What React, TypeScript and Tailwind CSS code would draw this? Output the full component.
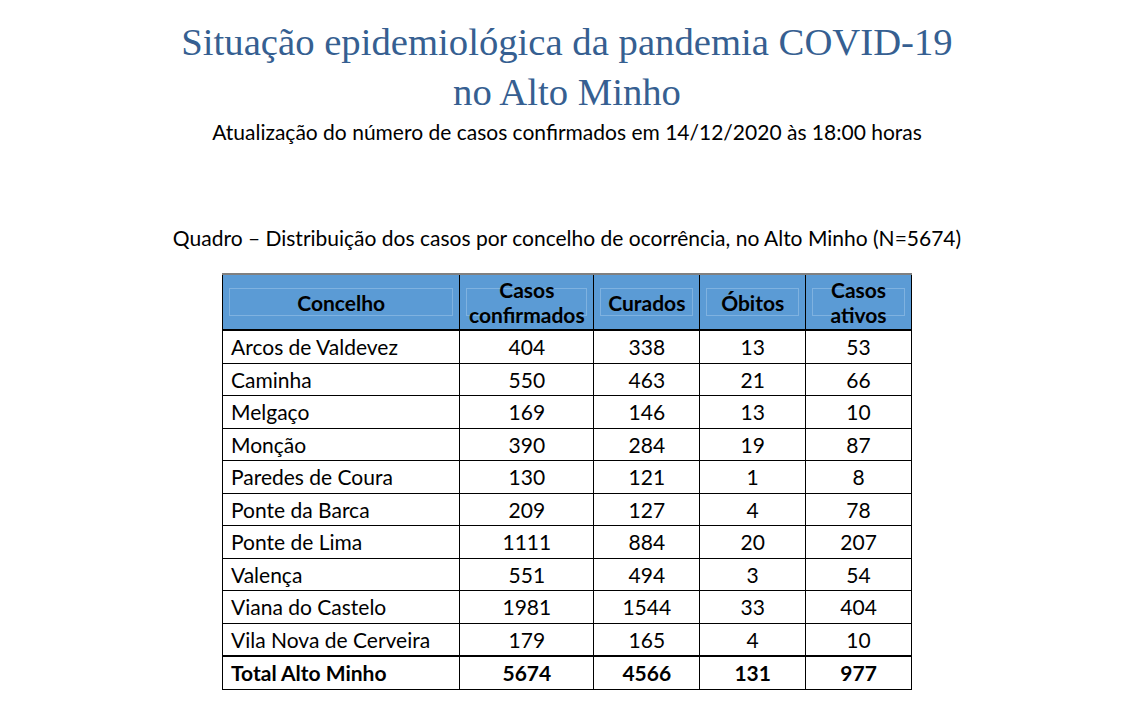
const rows: [string, number, number, number, number][] = [
  ["Arcos de Valdevez", 404, 338, 13, 53],
  ["Caminha", 550, 463, 21, 66],
  ["Melgaço", 169, 146, 13, 10],
  ["Monção", 390, 284, 19, 87],
  ["Paredes de Coura", 130, 121, 1, 8],
  ["Ponte da Barca", 209, 127, 4, 78],
  ["Ponte de Lima", 1111, 884, 20, 207],
  ["Valença", 551, 494, 3, 54],
  ["Viana do Castelo", 1981, 1544, 33, 404],
  ["Vila Nova de Cerveira", 179, 165, 4, 10],
];

const body = { fontFamily: "Lato, 'Open Sans', sans-serif" };
const serif = { fontFamily: "'Liberation Serif', 'DejaVu Serif', serif" };

function HeadCell({ lines, w }: { lines: string[]; w: string }) {
  return (
    <th className={`${w} h-[55px] p-0 border-x border-black bg-[#5b9bd5] align-middle`}>
      <div className="mx-[6px] my-[13px] h-[28px] border border-[#7fb2e0] flex flex-col items-center justify-center">
        {lines.map((l) => (
          <span key={l} className="leading-[25px] text-[21px] font-bold text-black">
            {l}
          </span>
        ))}
      </div>
    </th>
  );
}

export default function App() {
  return (
    <div className="w-[1126px] h-[727px] bg-white flex flex-col items-center pl-[8px]" style={body}>
      <h1 className="mt-[17px] text-center text-[#365f91] text-[38.7px] leading-[50px]" style={serif}>
        Situação epidemiológica da pandemia COVID-19
        <br />
        no Alto Minho
      </h1>
      <p className="mt-[2px] text-[21px] leading-[26px] text-black">
        Atualização do número de casos confirmados em 14/12/2020 às 18:00 horas
      </p>
      <p className="mt-[80px] text-[21px] leading-[26px] text-black">
        Quadro – Distribuição dos casos por concelho de ocorrência, no Alto Minho (N=5674)
      </p>
      <table className="mt-[22px] w-[690px] border-collapse text-[21px] text-black">
        <thead>
          <tr className="border-t-2 border-t-[#808080] border-b-2 border-b-black">
            <HeadCell lines={["Concelho"]} w="w-[238px]" />
            <HeadCell lines={["Casos", "confirmados"]} w="w-[134px]" />
            <HeadCell lines={["Curados"]} w="w-[106px]" />
            <HeadCell lines={["Óbitos"]} w="w-[106px]" />
            <HeadCell lines={["Casos", "ativos"]} w="w-[106px]" />
          </tr>
        </thead>
        <tbody>
          {rows.map(([name, c, r, o, a]) => (
            <tr key={name} className="h-[32.4px] border-b border-black">
              <td className="border-x border-black pl-[8px] leading-[30px] pt-[1px]">{name}</td>
              <td className="border-x border-black text-center">{c}</td>
              <td className="border-x border-black text-center">{r}</td>
              <td className="border-x border-black text-center">{o}</td>
              <td className="border-x border-black text-center">{a}</td>
            </tr>
          ))}
          <tr className="h-[32.4px] border-t-2 border-t-black border-b border-black font-bold">
            <td className="border-x border-black pl-[8px]">Total Alto Minho</td>
            <td className="border-x border-black text-center">5674</td>
            <td className="border-x border-black text-center">4566</td>
            <td className="border-x border-black text-center">131</td>
            <td className="border-x border-black text-center">977</td>
          </tr>
        </tbody>
      </table>
    </div>
  );
}
